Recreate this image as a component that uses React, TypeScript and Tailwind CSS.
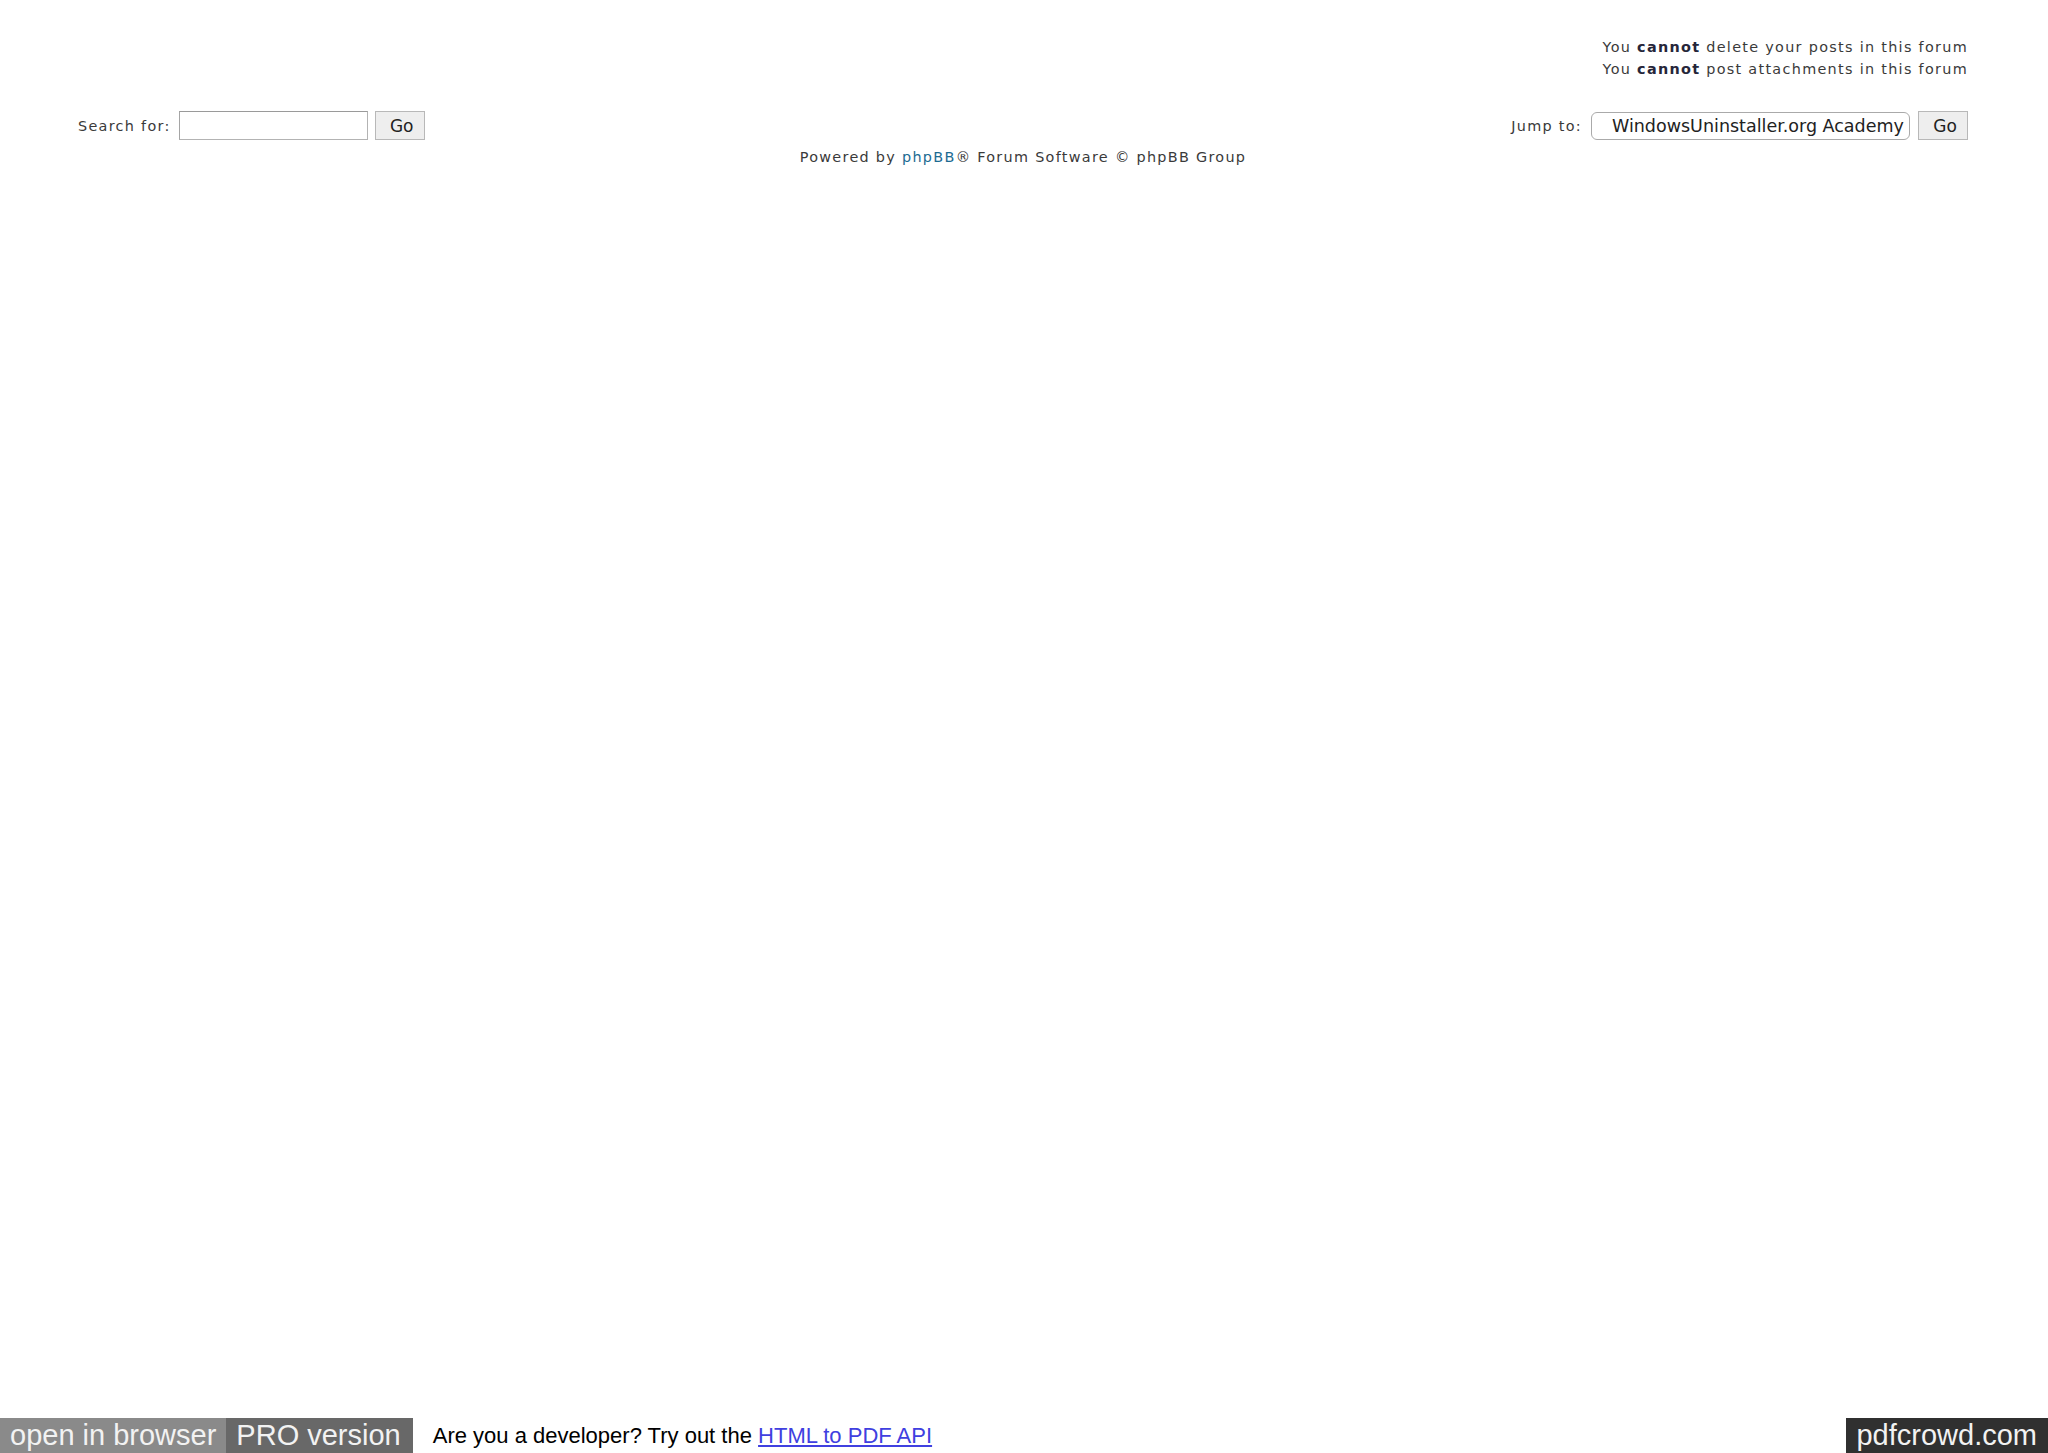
export default function App() {
  return (
    <div className="flex min-h-screen flex-col bg-white">
      {/* forum footer */}
      <div className="pl-[78px] pr-[80px] pt-[36px] font-['DejaVu_Sans',Verdana,sans-serif] text-[14.4px] leading-[22px] tracking-[1.3px] text-[#3a3a3a]">
        <div className="text-right">
          <p>
            You <strong className="font-bold text-[#26263a]">cannot</strong> delete your posts in this forum
          </p>
          <p>
            You <strong className="font-bold text-[#26263a]">cannot</strong> post attachments in this forum
          </p>
        </div>

        <div className="mt-[31px] flex items-center justify-between">
          <div className="flex items-center">
            <label className="mr-[8px]">Search for:</label>
            <input
              type="text"
              className="h-[29px] w-[189px] border border-[#b3b3b3] border-t-[#9a9a9a] border-l-[#a5a5a5] bg-white outline-none"
            />
            <button className="ml-[7px] h-[29px] w-[50px] border border-[#b8b8b8] bg-[#eeeeee] pl-[4px] text-[17px] tracking-normal text-[#222]">
              Go
            </button>
          </div>

          <div className="flex items-center">
            <label className="mr-[9px]">Jump to:</label>
            <select className="h-[28px] w-[319px] appearance-none rounded-[6px] border border-[#aaaaaa] bg-white pl-[20px] font-['DejaVu_Sans',Verdana,sans-serif] text-[17.5px] tracking-normal text-[#222] outline-none">
              <option>WindowsUninstaller.org Academy</option>
            </select>
            <button className="ml-[8px] h-[29px] w-[50px] border border-[#b8b8b8] bg-[#eeeeee] pl-[4px] text-[17px] tracking-normal text-[#222]">
              Go
            </button>
          </div>
        </div>

        <p className="mt-[6px] text-center">
          Powered by <a href="#" className="text-[#1b6b92]">phpBB</a>® Forum Software © phpBB Group
        </p>
      </div>

      {/* pdfcrowd bar */}
      <div className="mt-auto flex h-[35px] items-stretch font-['Liberation_Sans',Arial,sans-serif] leading-[35px]">
        <a href="#" className="bg-[#8a8a8a] px-[10px] text-[29px] text-[#f2f2f2]">
          open in browser
        </a>
        <a href="#" className="bg-[#686868] pl-[10px] pr-[12px] text-[29px] text-[#f2f2f2]">
          PRO version
        </a>
        <span className="ml-[20px] text-[22px] text-black">
          Are you a developer? Try out the{' '}
          <a href="#" className="text-[#4040e0] underline">
            HTML to PDF API
          </a>
        </span>
        <a href="#" className="ml-auto bg-[#303030] pl-[10px] pr-[11px] text-[29px] text-[#f2f2f2]">
          pdfcrowd.com
        </a>
      </div>
    </div>
  );
}
